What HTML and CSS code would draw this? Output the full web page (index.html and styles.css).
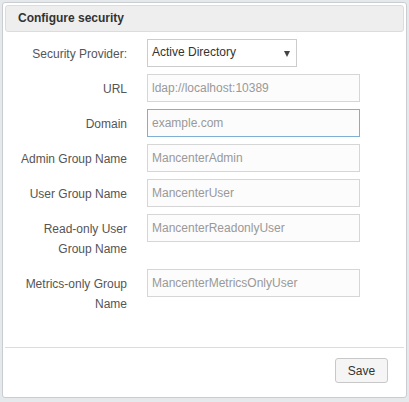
FILE: index.html
```html
<!DOCTYPE html>
<html>
<head>
<meta charset="utf-8">
<link rel="stylesheet" href="styles.css">
</head>
<body>
<div class="panel">
  <div class="panel-header">Configure security</div>
  <div class="panel-body">
    <div class="form-grid">
      <div class="label">Security Provider:</div>
      <div class="field"><div class="select">Active Directory<span class="caret"></span></div></div>

      <div class="label">URL</div>
      <div class="field"><input class="input" type="text" placeholder="ldap://localhost:10389"></div>

      <div class="label">Domain</div>
      <div class="field"><input class="input focused" type="text" placeholder="example.com"></div>

      <div class="label">Admin Group Name</div>
      <div class="field"><input class="input" type="text" placeholder="MancenterAdmin"></div>

      <div class="label">User Group Name</div>
      <div class="field"><input class="input" type="text" placeholder="MancenterUser"></div>

      <div class="label">Read-only User<br>Group Name</div>
      <div class="field"><input class="input" type="text" placeholder="MancenterReadonlyUser"></div>

      <div class="label">Metrics-only Group<br>Name</div>
      <div class="field"><input class="input" type="text" placeholder="MancenterMetricsOnlyUser"></div>
    </div>
  </div>
  <div class="panel-footer">
    <button class="btn" type="button">Save</button>
  </div>
</div>
</body>
</html>
```

FILE: styles.css
```css
html, body {
  margin: 0;
  padding: 0;
}
body {
  background: #e6e9ec;
  font-family: "Liberation Sans", Arial, sans-serif;
  font-size: 12px;
  color: #333;
  width: 409px;
  height: 402px;
  overflow: hidden;
}
.panel {
  box-sizing: border-box;
  margin: 2px 0 0 2px;
  width: 405px;
  height: 396px;
  background: #fff;
  border: 1px solid #c9ccd0;
  border-radius: 3px;
  padding: 2px;
  display: flex;
  flex-direction: column;
}
.panel-header {
  box-sizing: border-box;
  height: 27px;
  background: #eeeeee;
  border: 1px solid #dcdcdc;
  border-radius: 3px;
  padding: 0 0 0 12px;
  font-weight: bold;
  font-size: 12px;
  line-height: 25px;
  color: #333;
}
.panel-body {
  flex: 1;
  padding-top: 7px;
}
.form-grid {
  display: grid;
  grid-template-columns: 122px 214px;
  column-gap: 20px;
  row-gap: 7px;
}
.label {
  text-align: right;
  color: #555;
  line-height: 20px;
  padding: 5px 0 3px;
}
.field {
  display: flex;
  align-items: flex-start;
}
.select {
  position: relative;
  box-sizing: border-box;
  width: 150px;
  height: 28px;
  border: 1px solid #cccccc;
  background: #fff;
  color: #333;
  padding-left: 4px;
  line-height: 25px;
}
.caret {
  position: absolute;
  right: 6px;
  top: 11px;
  width: 0;
  height: 0;
  border-left: 3px solid transparent;
  border-right: 3px solid transparent;
  border-top: 6px solid #444;
}
.input {
  box-sizing: border-box;
  width: 213px;
  height: 28px;
  margin: 0;
  border: 1px solid #d6d6d6;
  background: #fcfcfc;
  padding: 0 0 0 4px;
  font-family: "Liberation Sans", Arial, sans-serif;
  font-size: 12px;
  color: #333;
  outline: none;
}
.input::placeholder {
  color: #999;
  opacity: 1;
}
.input.focused {
  border-color: #7fb0d3;
}
.panel-footer {
  box-sizing: border-box;
  height: 48px;
  border-top: 1px solid #dcdcdc;
  display: flex;
  justify-content: flex-end;
  align-items: flex-start;
  padding: 10px 16px 0 0;
}
.btn {
  box-sizing: border-box;
  width: 53px;
  height: 25px;
  background: #f5f5f5;
  border: 1px solid #c8c8c8;
  border-radius: 3px;
  font-family: "Liberation Sans", Arial, sans-serif;
  font-size: 12px;
  color: #333;
  padding: 0;
}
```
